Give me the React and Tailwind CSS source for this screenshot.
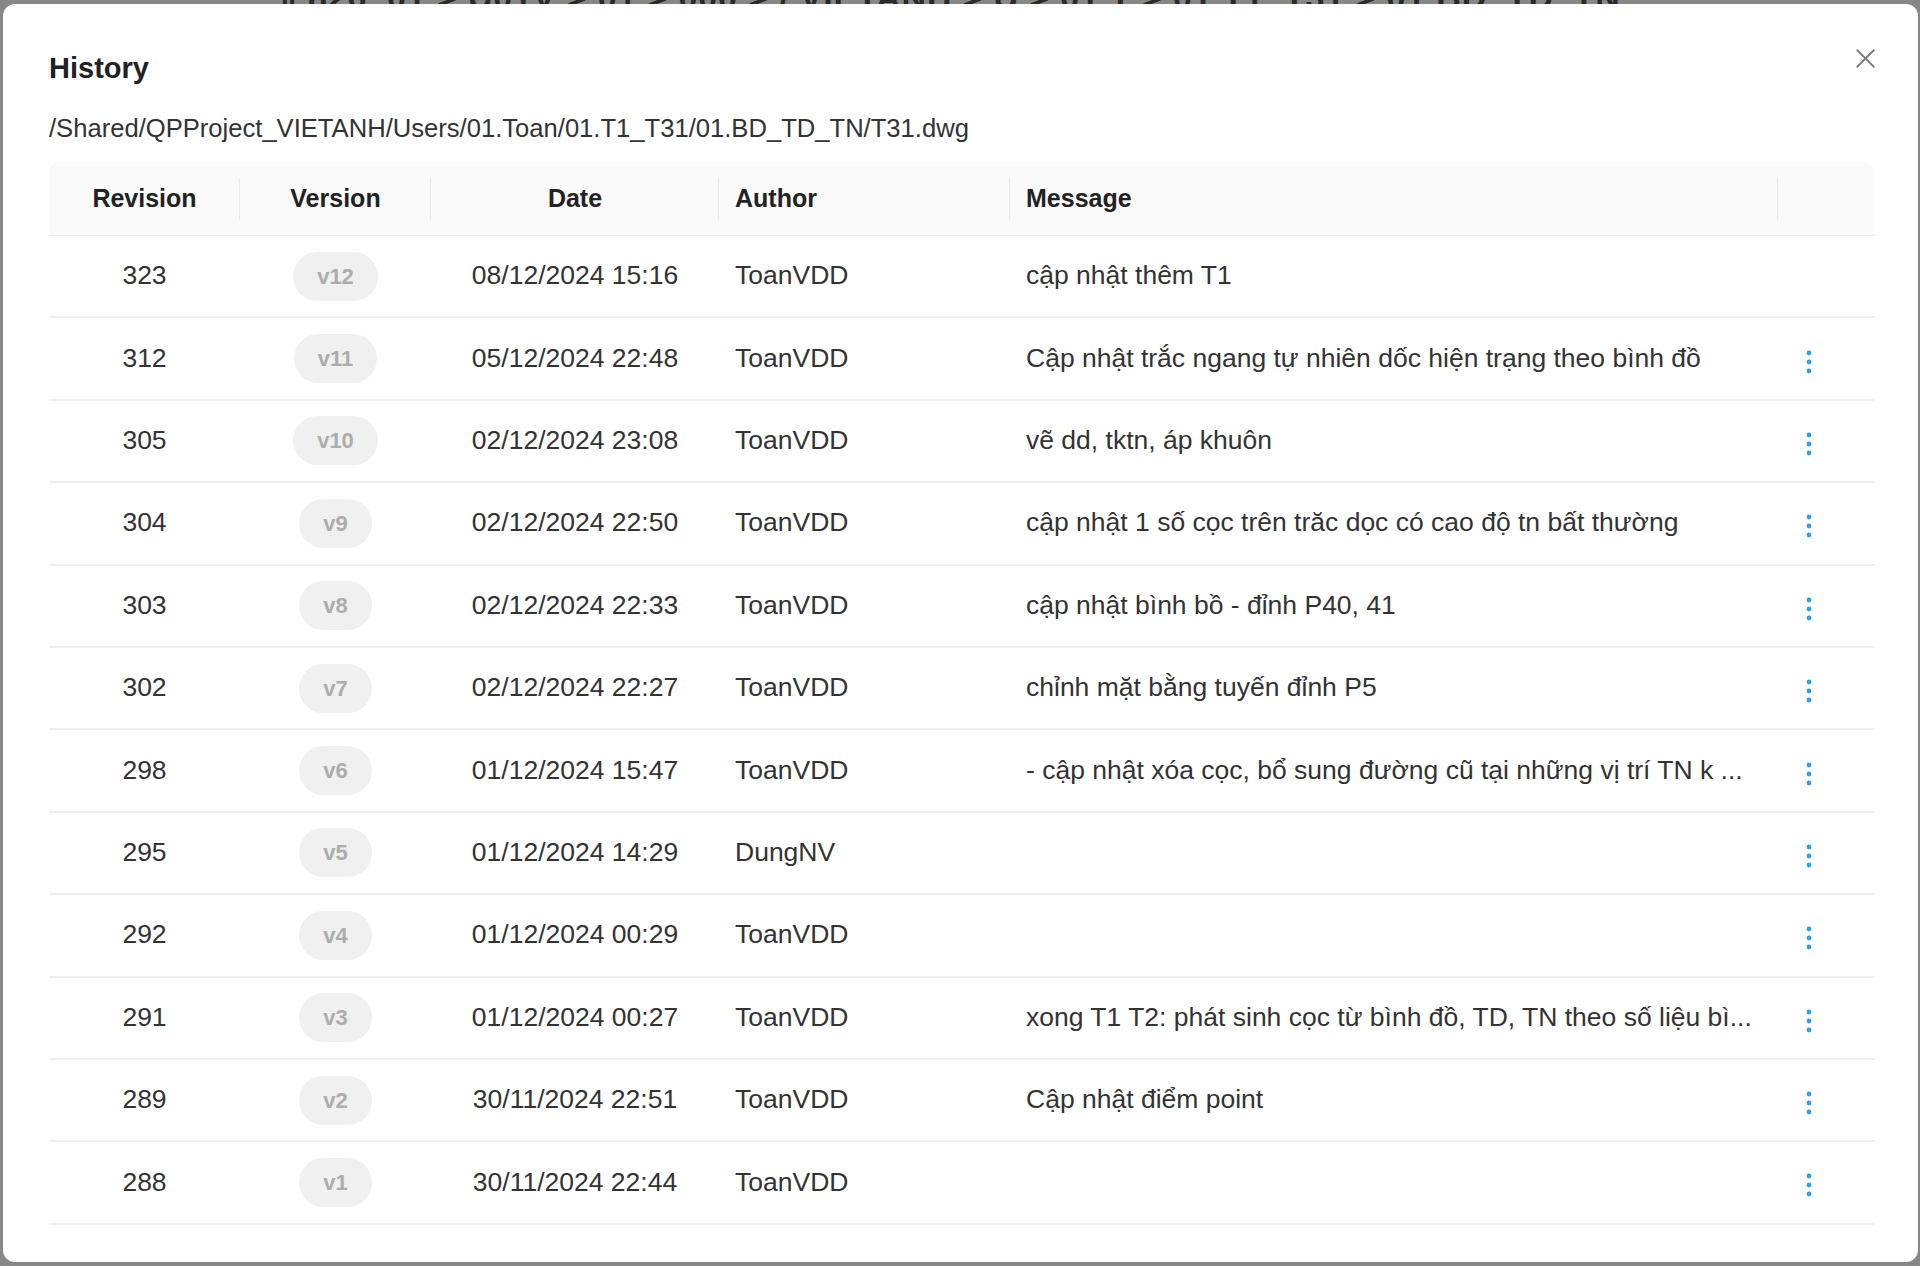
import React from 'react';
import { X } from 'lucide-react';

const rows = [
  { rev: 323, ver: 'v12', date: '08/12/2024 15:16', author: 'ToanVDD', msg: 'cập nhật thêm T1', more: false },
  { rev: 312, ver: 'v11', date: '05/12/2024 22:48', author: 'ToanVDD', msg: 'Cập nhật trắc ngang tự nhiên dốc hiện trạng theo bình đồ', more: true },
  { rev: 305, ver: 'v10', date: '02/12/2024 23:08', author: 'ToanVDD', msg: 'vẽ dd, tktn, áp khuôn', more: true },
  { rev: 304, ver: 'v9', date: '02/12/2024 22:50', author: 'ToanVDD', msg: 'cập nhật 1 số cọc trên trăc dọc có cao độ tn bất thường', more: true },
  { rev: 303, ver: 'v8', date: '02/12/2024 22:33', author: 'ToanVDD', msg: 'cập nhật bình bồ - đỉnh P40, 41', more: true },
  { rev: 302, ver: 'v7', date: '02/12/2024 22:27', author: 'ToanVDD', msg: 'chỉnh mặt bằng tuyến đỉnh P5', more: true },
  { rev: 298, ver: 'v6', date: '01/12/2024 15:47', author: 'ToanVDD', msg: '- cập nhật xóa cọc, bổ sung đường cũ tại những vị trí TN k ...', more: true },
  { rev: 295, ver: 'v5', date: '01/12/2024 14:29', author: 'DungNV', msg: '', more: true },
  { rev: 292, ver: 'v4', date: '01/12/2024 00:29', author: 'ToanVDD', msg: '', more: true },
  { rev: 291, ver: 'v3', date: '01/12/2024 00:27', author: 'ToanVDD', msg: 'xong T1 T2: phát sinh cọc từ bình đồ, TD, TN theo số liệu bì...', more: true },
  { rev: 289, ver: 'v2', date: '30/11/2024 22:51', author: 'ToanVDD', msg: 'Cập nhật điểm point', more: true },
  { rev: 288, ver: 'v1', date: '30/11/2024 22:44', author: 'ToanVDD', msg: '', more: true },
];

const MoreIcon = () => (
  <svg width="8" height="24" viewBox="0 0 8 24" className="text-[#2f9fe6]">
    <circle cx="4" cy="3" r="2.4" fill="currentColor" />
    <circle cx="4" cy="12" r="2.4" fill="currentColor" />
    <circle cx="4" cy="21" r="2.4" fill="currentColor" />
  </svg>
);

const HeadCell = ({ children, className, divider = true }) => (
  <div className={`relative flex items-center h-full ${className}`}>
    {children}
    {divider && <span className="absolute right-0 top-1/2 -translate-y-1/2 h-[42px] w-px bg-[#ebebeb]" />}
  </div>
);

export default function App() {
  return (
    <div
      className="relative w-[1920px] h-[1266px] bg-[#878787] overflow-hidden"
      style={{ fontFamily: '"Liberation Sans", Arial, sans-serif' }}
    >
      {/* page behind the overlay */}
      <div className="absolute left-[280px] top-[-28px] whitespace-nowrap text-[34px] font-bold text-[#2a2a2a] tracking-wide">
        ‖ 826_01 &gt; U01V &gt; 01 &gt; 000 &gt; / VIETANH &gt; U &gt; 01.T &gt; 01.T1_T31 &gt; 01.BD_TD_TN
      </div>

      <div className="relative ml-[3px] mt-[4px] w-[1915px] h-[1258px] bg-white rounded-[12px] pl-[46px] pr-[40px] pt-[44px]">
        <button className="absolute right-[36px] top-[38px] text-[#7a7a7a]">
          <X size={33} strokeWidth={1.3} />
        </button>

        <h1 className="text-[29px] leading-[40px] font-semibold text-[#222]">History</h1>
        <p className="mt-[22px] text-[25.6px] leading-[36px] text-[#333]">
          /Shared/QPProject_VIETANH/Users/01.Toan/01.T1_T31/01.BD_TD_TN/T31.dwg
        </p>

        <div className="mt-[16px] w-[1826px]">
          <div className="flex h-[74px] bg-[#fafafa] rounded-t-[10px] border-b border-[#efefef] text-[25px] font-semibold text-[#222]">
            <HeadCell className="w-[191px] justify-center">Revision</HeadCell>
            <HeadCell className="w-[191px] justify-center">Version</HeadCell>
            <HeadCell className="w-[288px] justify-center">Date</HeadCell>
            <HeadCell className="w-[291px] pl-[16px]">Author</HeadCell>
            <HeadCell className="w-[768px] pl-[16px]">Message</HeadCell>
            <HeadCell className="w-[97px]" divider={false} />
          </div>

          {rows.map((r) => (
            <div key={r.rev} className="flex items-center h-[82.4px] border-b-2 border-[#f0f0f0] text-[26.5px] text-[#333]">
              <div className="w-[191px] text-center">{r.rev}</div>
              <div className="w-[191px] flex justify-center">
                <span className="h-[49px] px-[24px] rounded-full bg-[#f0f0f0] text-[#acacac] text-[22px] font-bold flex items-center">
                  {r.ver}
                </span>
              </div>
              <div className="w-[288px] text-center">{r.date}</div>
              <div className="w-[291px] pl-[16px]">{r.author}</div>
              <div className="w-[768px] pl-[16px] whitespace-nowrap overflow-hidden">{r.msg}</div>
              <div className="w-[97px] flex pl-[27px] pt-[6px]">{r.more && <MoreIcon />}</div>
            </div>
          ))}
        </div>
      </div>
    </div>
  );
}
